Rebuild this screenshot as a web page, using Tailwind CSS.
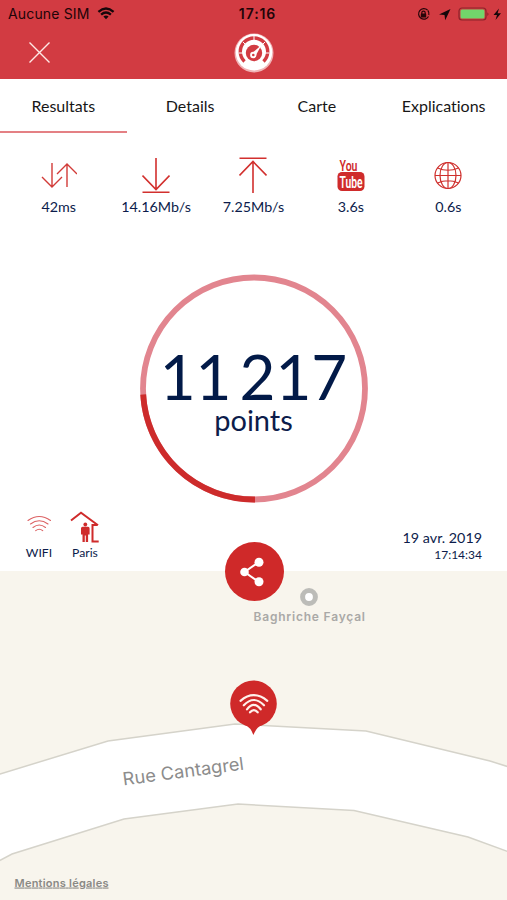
<!DOCTYPE html>
<html lang="fr">
<head>
<meta charset="utf-8">
<title>Resultats</title>
<script src="https://cdn.jsdelivr.net/npm/@tailwindcss/browser@4"></script>
</head>
<body class="bg-white">
<div class="w-[507px] h-[900px] overflow-hidden flex flex-col font-['Lato',sans-serif] text-[#0c1c4b] [font-variant-ligatures:none]">
  <header class="h-[79px] bg-[#d23b42] flex flex-col shrink-0">
    <div class="h-[27px] grid grid-cols-3 items-center font-['Inter',sans-serif] text-[#210408] text-[14px]">
      <div class="flex items-center gap-[7px] pl-[8px]">
        <span class="w-[82px] whitespace-nowrap tracking-[0.15px]">Aucune SIM</span>
        <svg class="w-[18px] h-[13px]" viewBox="0 0 17 13" fill="none" stroke="#16070a" stroke-width="2.3"><path d="M.9 4.8Q8.500-1.800 16.100 4.800M3.600 7.600Q8.500 3.400 13.400 7.600"/><path d="M8.500 12.300L5.900 9.600Q8.500 7.500 11.100 9.600Z" fill="#16070a" stroke="none"/></svg>
      </div>
      <div class="text-center font-semibold pl-[8px] tracking-[0.9px]">17:16</div>
      <svg class="justify-self-end w-[90px] h-[16px]" viewBox="417 5 90 16" fill="none">
        <g stroke="#260509" stroke-width="1.200"><path d="M427.500 9A5.300 5.300 0 1 0 428.500 15.500"/><path d="M428.800 14A5.300 5.300 0 0 0 427.800 9.300"/><path d="M421.800 13v-1.200a1.700 1.700 0 0 1 3.400 0V13"/></g>
        <rect x="420.800" y="12.500" width="5.400" height="3.900" rx=".5" fill="#260509"/>
        <path d="M450.500 8L439 13.400L444.500 13.900L445.200 19.200Z" fill="#16070a"/>
        <rect x="459" y="7" width="27" height="12" rx="3" stroke="#8c242a" stroke-width="1.200"/>
        <rect x="460.500" y="8.500" width="24" height="9" rx="1.500" fill="#72d66b"/>
        <path d="M487.300 11.200q2.600 1.800 0 3.700z" fill="#8c242a"/>
        <path d="M499 7.500L493.500 14H497L495.500 19L501 12.300H497.600Z" fill="#16070a"/>
      </svg>
    </div>
    <div class="h-[52px] grid grid-cols-3 items-center">
      <svg class="ml-[29px] -mt-[2px] w-[21px] h-[21px]" viewBox="0 0 21 21" stroke="#ffe9e6" stroke-width="1.400"><path d="M.5.500L20.500 20.500M20.500.500L.5 20.500"/></svg>
      <svg class="justify-self-center -mt-[1px] w-[40px] h-[40px]" viewBox="0 0 40 40" fill="none">
        <circle cx="20" cy="20" r="19.500" fill="#f0b3b6"/><circle cx="20" cy="19.300" r="18.200" fill="#fff"/>
        <path d="M10.500 28.500A13.700 13.700 0 1 1 29.500 28.500" stroke="#d23b42" stroke-width="3.400"/>
        <path d="M20 3v6M5 20h4M31 20h4M9 9l3 3M31 9l-3 3" stroke="#fff" stroke-width="1"/>
        <circle cx="20" cy="20" r="8.200" fill="#d23b42"/>
        <path d="M17.700 20.500L27.500 12L21.500 23Z" fill="#fff"/><circle cx="19.300" cy="22" r="3.200" fill="#fff"/><circle cx="19.300" cy="22" r="1.300" fill="#d23b42"/>
      </svg>
    </div>
  </header>

  <nav class="h-[54px] grid grid-cols-4 shrink-0 text-center text-[16px] text-[#171717]">
    <div class="border-b-2 border-[#e48084] pt-[15px]">Resultats</div>
    <div class="pt-[15px]">Details</div>
    <div class="pt-[15px]">Carte</div>
    <div class="pt-[15px]">Explications</div>
  </nav>

  <section class="h-[87px] pt-[20px] px-[10px] grid grid-cols-5 shrink-0 text-center text-[14.300px] leading-[20px]">
    <div class="flex flex-col items-center gap-[4px]">
      <svg class="w-[36px] h-[40px]" viewBox="0 0 36 40" fill="none" stroke="#d23b38" stroke-width="1.400"><path d="M11 10V34M1 24L11 34L21 24M26 34V11M16 21L26 11L36 21"/></svg>
      <span>42ms</span>
    </div>
    <div class="flex flex-col items-center gap-[4px]">
      <svg class="w-[28px] h-[40px]" viewBox="0 0 28 40" fill="none" stroke="#d2302e" stroke-width="1.600"><path d="M14 5V37M.500 22.500L14 36.500L27.500 22.500M.5 39.200H27.500"/></svg>
      <span>14.16Mb/s</span>
    </div>
    <div class="flex flex-col items-center gap-[4px]">
      <svg class="w-[28px] h-[40px]" viewBox="0 0 28 40" fill="none" stroke="#d2302e" stroke-width="1.600"><path d="M14 40V8M.5 22.500L14 8.500L27.500 22.500M.5 5.300H27.500"/></svg>
      <span>7.25Mb/s</span>
    </div>
    <div class="flex flex-col items-center gap-[4px]">
      <svg class="w-[28px] h-[40px] overflow-visible" viewBox="0 0 28 40" font-family="Roboto, sans-serif" font-weight="600">
        <text x="2.500" y="18" font-size="15.500" textLength="18" lengthAdjust="spacingAndGlyphs" fill="#cf2b2b">You</text>
        <rect x=".5" y="19" width="27" height="19" rx="4.500" fill="#cf2b2b"/>
        <text x="2.500" y="34.800" font-size="16" textLength="23" lengthAdjust="spacingAndGlyphs" fill="#fff">Tube</text>
      </svg>
      <span>3.6s</span>
    </div>
    <div class="flex flex-col items-center gap-[4px]">
      <svg class="w-[28px] h-[40px]" viewBox="0 0 28 40" fill="none" stroke="#cf2f2c" stroke-width="1.200"><circle cx="14" cy="22.500" r="13"/><ellipse cx="14" cy="22.500" rx="8" ry="13"/><path d="M14 9.500v26M1 22.500h26M3.500 15q10.500 4.500 21 0M3.500 30q10.500-4.500 21 0"/></svg>
      <span>0.6s</span>
    </div>
  </section>

  <main class="h-[351px] shrink-0 flex flex-col">
    <div class="h-[290px] grid justify-items-center">
      <div class="col-start-1 row-start-1 pt-[54px]">
        <svg class="w-[230px] h-[230px]" viewBox="0 0 230 230" fill="none" stroke-width="5.800">
          <circle cx="115" cy="114.500" r="111" stroke="#e2858f"/>
          <path d="M4.200 120.500A111 111 0 0 0 116 225.500" stroke="#cd2b2b"/>
        </svg>
      </div>
      <div class="col-start-1 row-start-1 pt-[125px] flex flex-col items-center">
        <div class="text-[62px] leading-[62px] text-[#021a48] whitespace-nowrap [word-spacing:-8px]">11 217</div>
        <div class="text-[29px] leading-[34px] -mt-[4px]">points</div>
      </div>
    </div>
    <div class="flex justify-between pl-[25px] pr-[25px] text-[12.200px] leading-[16px]">
      <div class="flex gap-[18px]">
        <div class="flex flex-col items-center w-[28px]">
          <svg class="w-[24px] h-[35px]" viewBox="27 510 24 35" fill="none" stroke="#dc6264" stroke-width="1.100" stroke-linecap="round"><path d="M28 520.500Q39.200 512.500 50.500 520.500M30.500 524Q39.200 517.500 48 524M33 527.500Q39.200 522.500 45.500 527.500M35.700 530.700Q39.200 527.800 42.700 530.700"/></svg>
          <span>WIFI</span>
        </div>
        <div class="flex flex-col items-center w-[28px]">
          <svg class="w-[30px] h-[35px] shrink-0" viewBox="70 510 30 35" fill="none" stroke="#cf2b2b" stroke-width="2"><path d="M71 520.500L81 512.700L98 525.300M97.500 525H92.500V541.500H98.700"/><circle cx="85.300" cy="524.500" r="1.900" fill="#cf2b2b" stroke="none"/><path d="M81 528.500q0-1.700 1.500-1.700h5.600q1.500 0 1.500 1.700v6h-1.500v7.500h-2.300v-6.500h-1v6.500h-2.300v-7.500h-1.500z" fill="#cf2b2b" stroke="none"/></svg>
          <span>Paris</span>
        </div>
      </div>
      <div class="text-right pt-[18px]">
        <div class="text-[14.300px] leading-[20px]">19 avr. 2019</div>
        <div class="text-[12px] leading-[14px]">17:14:34</div>
      </div>
    </div>
  </main>

  <section class="relative h-[329px] bg-[#f8f5ed] shrink-0">
    <svg class="w-[507px] h-[329px]" viewBox="0 571 507 329" fill="none">
      <path d="M-5 776L0 774L108 741L235 724L366 731L490 761L512 768V853L468 837L354 810.500L238 804L124 819L12 854L-5 863Z" fill="#fff" stroke="#d5d3ca" stroke-width="1.500"/>
      <circle cx="309" cy="597" r="6.400" fill="#fff" stroke="#bcbcb8" stroke-width="5"/>
      <text x="253.500" y="620.500" font-family="Inter, sans-serif" font-size="12" font-weight="600" fill="#aaa9a7" textLength="111.500">Baghriche Fayçal</text>
      <text transform="translate(123.500 785.500) rotate(-7.500)" font-family="Inter, sans-serif" font-size="18" fill="#8c8c8c" textLength="122" lengthAdjust="spacingAndGlyphs">Rue Cantagrel</text>
      <circle cx="253.500" cy="703.700" r="23.300" fill="#cf2929"/>
      <path d="M245 725Q250.500 727 253.400 735Q256.500 727 262 725Z" fill="#cf2929"/>
      <path d="M240.500 700.800Q253.800 689.500 267.300 700.800M243.800 705.300Q253.800 694.700 264 705.300M247 709.300Q253.800 700.500 260.700 709.300M250 712.300Q253.800 707.800 257.700 712.300" stroke="#fff1ec" stroke-width="2.200" stroke-linecap="round"/>
      <text x="14.500" y="886.500" font-family="Inter, sans-serif" font-size="11" font-weight="600" fill="#8a8985" textLength="94" text-decoration="underline">Mentions légales</text>
    </svg>
    <button class="absolute left-[224.5px] -top-[29px] w-[59px] h-[59px] rounded-full bg-[#cf2929] flex items-center justify-center">
      <svg class="w-[26px] h-[30px] mr-[4px]" viewBox="0 0 26 30" fill="#fff" stroke="#fff"><path d="M20 5L5.500 15L20 25" fill="none" stroke-width="2"/><circle cx="5.500" cy="15" r="4.300" stroke="none"/><circle cx="20" cy="5.300" r="4.500" stroke="none"/><circle cx="20" cy="24.700" r="4.500" stroke="none"/></svg>
    </button>
  </section>
</div>
</body>
</html>
